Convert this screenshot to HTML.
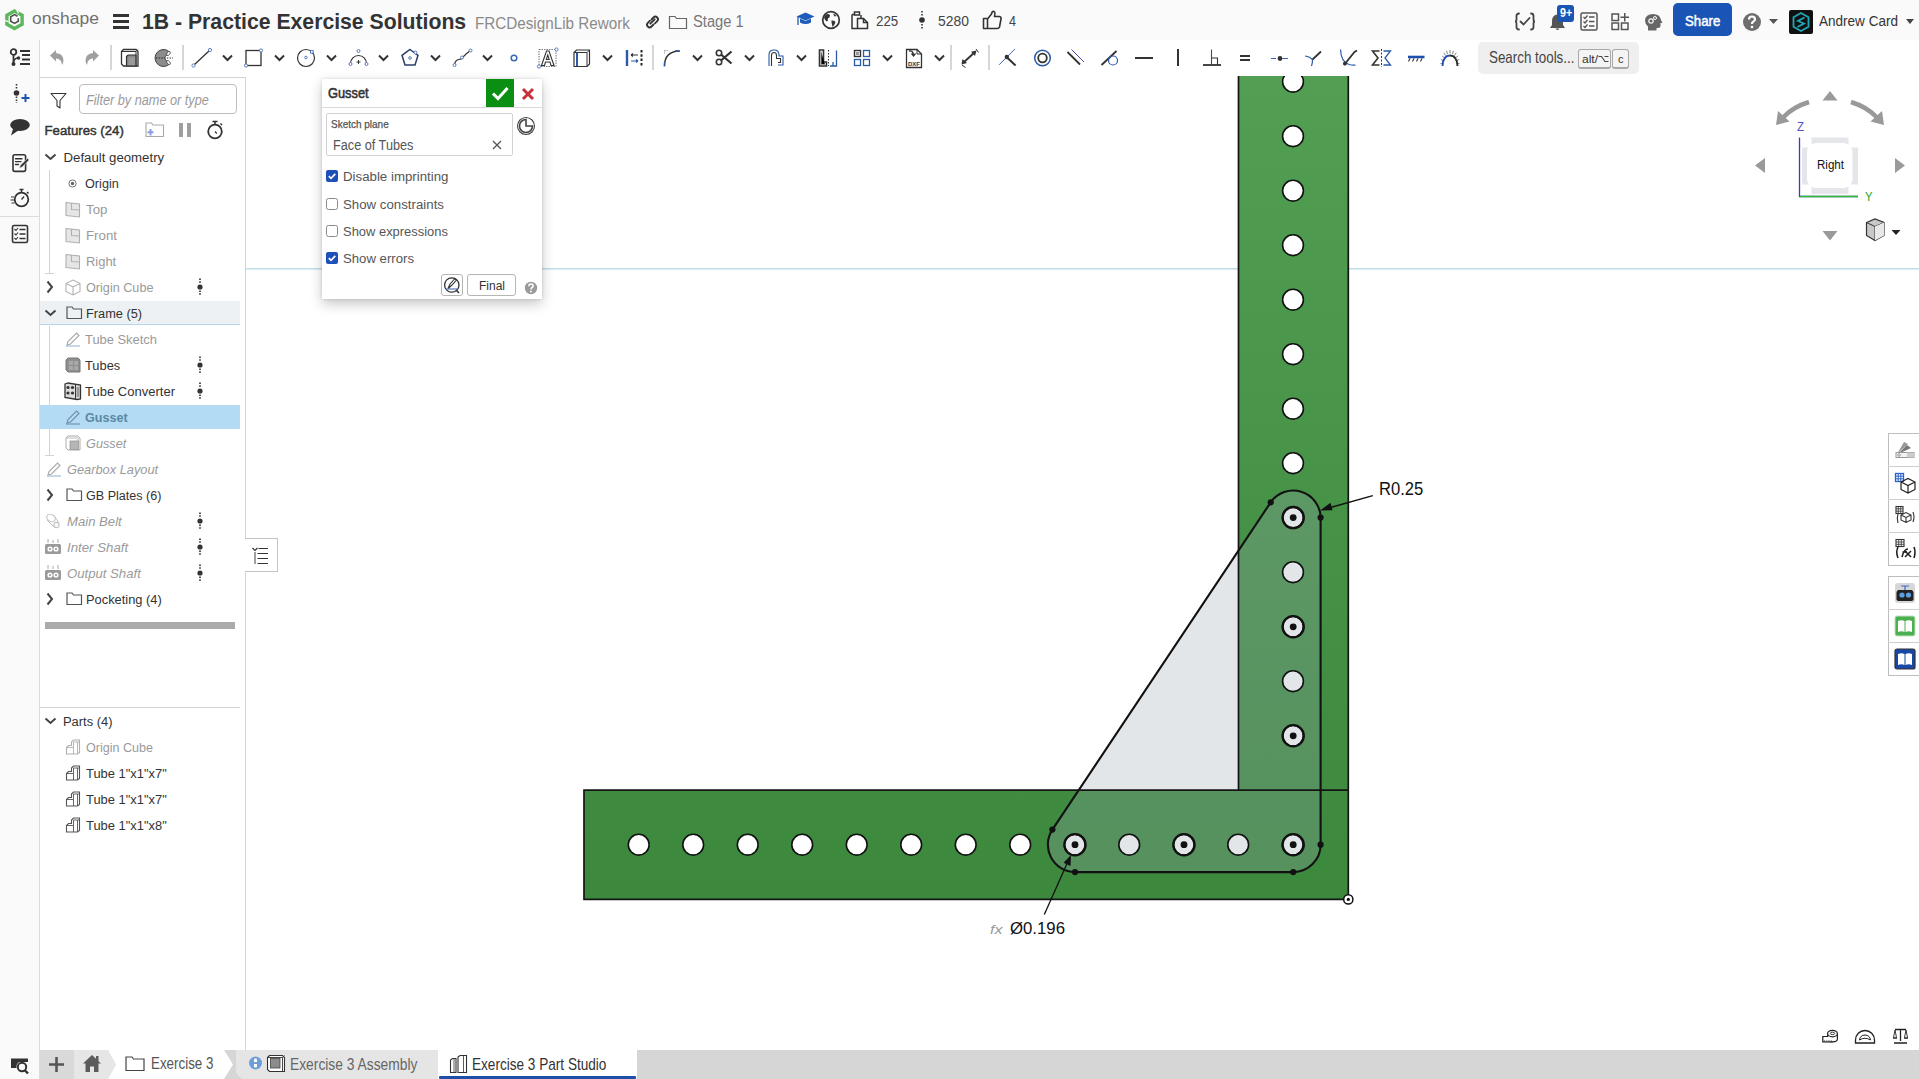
<!DOCTYPE html>
<html><head><meta charset="utf-8"><style>
html,body{margin:0;padding:0;width:1919px;height:1079px;overflow:hidden;background:#fff;}
body{position:relative;font-family:"Liberation Sans",sans-serif;}
.b{position:absolute;}
.s{position:absolute;overflow:visible;}
.t{position:absolute;white-space:nowrap;transform-origin:0 0;}
</style></head><body>
<div class="b" style="left:0px;top:0px;width:1919px;height:40px;background:#fafafa"></div>
<div class="b" style="left:0px;top:40px;width:40px;height:1039px;background:#fafafa;border-right:1px solid #dcdcdc;box-sizing:border-box"></div>
<div class="b" style="left:40px;top:40px;width:1879px;height:37px;background:#fff"></div>
<div class="b" style="left:40px;top:77px;width:206px;height:973px;background:#fff;border-top:1px solid #d4d4d4;border-right:1px solid #d4d4d4;box-sizing:border-box"></div>
<div class="b" style="left:246px;top:77px;width:1673px;height:973px;background:#fff"></div>
<svg class="s" style="left:4px;top:8px;" width="22" height="24" viewBox="0 0 22 24">
<path d="M10.5 2.95 L18.12 7.35 L18.12 16.15 L10.5 20.55 L2.88 16.15 L2.88 7.35 Z" fill="none" stroke="#5cb85c" stroke-width="3.4" stroke-linejoin="miter"/>
<path d="M12.6 2.2 L14.6 5.4" stroke="#fafafa" stroke-width="1.3"/>
<path d="M0.8 12.6 L4.6 13.6" stroke="#fafafa" stroke-width="1.3"/>
<path d="M13.5 8.3 L10.5 6.6 L6.7 8.8 V13.2 L10.5 15.4 L14.3 13.2 V10.2" fill="none" stroke="#505050" stroke-width="1.6"/>
</svg>
<div class="t" style="left:31.80px;top:10.82px;font-size:16.86px;line-height:16.86px;color:#707070;transform:scaleX(1.0328);">onshape</div>
<div class="b" style="left:113px;top:14px;width:16px;height:3px;background:#333"></div>
<div class="b" style="left:113px;top:20px;width:16px;height:3px;background:#333"></div>
<div class="b" style="left:113px;top:26px;width:16px;height:3px;background:#333"></div>
<div class="t" style="left:141.70px;top:10.61px;font-size:21.95px;line-height:21.95px;color:#333;font-weight:bold;transform:scaleX(0.9668);">1B - Practice Exercise Solutions</div>
<div class="t" style="left:475.30px;top:16.08px;font-size:15.84px;line-height:15.84px;color:#8a8a8a;transform:scaleX(0.9618);">FRCDesignLib Rework</div>
<svg class="s" style="left:644px;top:14px;" width="17" height="16" viewBox="0 0 17 16">
<g fill="none" stroke="#333" stroke-width="1.8" stroke-linecap="round">
<path d="M7.5 5.5 L9.5 3.5 A2.6 2.6 0 0 1 13.2 7.2 L11 9.4"/>
<path d="M9.5 10.5 L7.5 12.5 A2.6 2.6 0 0 1 3.8 8.8 L6 6.6"/>
<path d="M6.3 9.7 L10.7 5.3"/>
</g></svg>
<svg class="s" style="left:668px;top:14px;" width="20" height="16" viewBox="0 0 20 16"><path d="M1.5 2.5 H7 L8.5 4.5 H18.5 V14.5 H1.5 Z" fill="none" stroke="#666" stroke-width="1.2"/></svg>
<div class="t" style="left:692.80px;top:14.48px;font-size:15.84px;line-height:15.84px;color:#777;transform:scaleX(0.9302);">Stage 1</div>
<svg class="s" style="left:796px;top:11px;" width="19" height="17" viewBox="0 0 19 17">
<path d="M9.5 1.5 L18.5 5.5 L9.5 9.5 L0.5 5.5 Z" fill="#1d5cb8"/>
<path d="M4 7.5 V11.5 Q9.5 14.5 15 11.5 V7.5 L9.5 10 Z" fill="#1d5cb8"/>
<path d="M2 6 V14" stroke="#1d5cb8" stroke-width="1.3"/>
</svg>
<svg class="s" style="left:821px;top:10px;" width="20" height="20" viewBox="0 0 20 20">
<circle cx="10" cy="10" r="8.3" fill="none" stroke="#333" stroke-width="1.7"/>
<path d="M5 4.5 Q7.5 3.5 9 5 L8.5 7.5 Q6 8.5 7 10.5 L5.5 11.5 Q3 9.5 3 7 Z" fill="#333"/>
<path d="M10.5 10.5 Q13.5 10 14.5 12 Q13.5 15.5 11.5 17 Q11 14 10.5 12.5 Z" fill="#333"/>
<path d="M12 3.5 Q14.5 4 15.5 6 L13.5 6.5 Z" fill="#333"/>
</svg>
<svg class="s" style="left:850px;top:11px;" width="20" height="19" viewBox="0 0 20 19">
<g fill="none" stroke="#333" stroke-width="1.5">
<path d="M2 3.5 H5 M2 3.5 V17.5 H7"/>
<rect x="4.5" y="1" width="5" height="3" />
<path d="M7.5 7.5 H13.5 L17.5 11.5 V17.5 H7.5 Z"/>
<path d="M13.5 7.5 V11.5 H17.5"/>
<path d="M11 4 V7.5"/>
</g></svg>
<div class="t" style="left:875.80px;top:14.14px;font-size:14.94px;line-height:14.94px;color:#444;transform:scaleX(0.8906);">225</div>
<svg class="s" style="left:917px;top:10px;" width="10" height="20" viewBox="0 0 10 20">
<circle cx="5" cy="10" r="2.8" fill="#333"/>
<path d="M5 1 V6 M5 14 V19" stroke="#333" stroke-width="1.6" stroke-dasharray="1.6 1.4"/>
</svg>
<div class="t" style="left:937.60px;top:14.14px;font-size:14.94px;line-height:14.94px;color:#444;transform:scaleX(0.9293);">5280</div>
<svg class="s" style="left:982px;top:10px;" width="21" height="20" viewBox="0 0 21 20">
<path d="M1.5 8.5 H5.5 V18.5 H1.5 Z M5.5 9 L9.5 4 Q10 1 12 1.5 Q13.5 2 12.5 6.5 H17.5 Q19.5 7 19 9 L17.5 17 Q17 18.5 15 18.5 H5.5" fill="none" stroke="#333" stroke-width="1.6" stroke-linejoin="round"/>
</svg>
<div class="t" style="left:1009.00px;top:14.14px;font-size:14.94px;line-height:14.94px;color:#444;transform:scaleX(0.8425);">4</div>
<svg class="s" style="left:1514px;top:12px;" width="22" height="19" viewBox="0 0 22 19">
<g fill="none" stroke="#444" stroke-width="1.8" stroke-linecap="round">
<path d="M5 1.5 Q2.5 1.5 2.5 4 V7.5 Q2.5 9.5 1 9.5 Q2.5 9.5 2.5 11.5 V15 Q2.5 17.5 5 17.5"/>
<path d="M17 1.5 Q19.5 1.5 19.5 4 V7.5 Q19.5 9.5 21 9.5 Q19.5 9.5 19.5 11.5 V15 Q19.5 17.5 17 17.5"/>
<path d="M6.5 9.5 L9.5 12.5 L15.5 6"/>
</g></svg>
<svg class="s" style="left:1548px;top:13px;" width="20" height="18" viewBox="0 0 20 18">
<path d="M9.5 1.5 Q4 2 4 8 V12 L2 15 H17 L15 12 V8 Q15 2 9.5 1.5 Z" fill="#555"/>
<path d="M7.5 15.5 Q9.5 18.5 11.5 15.5" fill="#555"/>
</svg>
<div class="b" style="left:1557px;top:5px;width:17px;height:17px;background:#1a55b5;border-radius:3px"></div>
<div class="t" style="left:1559.50px;top:7.14px;font-size:12.35px;line-height:12.35px;color:#fff;font-weight:bold;transform:scaleX(0.8733);">9+</div>
<svg class="s" style="left:1580px;top:12px;" width="18" height="19" viewBox="0 0 18 19">
<rect x="1" y="1" width="16" height="17" rx="1.5" fill="none" stroke="#555" stroke-width="1.5"/>
<g stroke="#555" stroke-width="1.3" fill="none">
<path d="M3.5 5 L5 6.5 L7.5 3.5 M3.5 9.5 L5 11 L7.5 8 M3.5 14 L5 15.5 L7.5 12.5"/>
<path d="M9 5 H14.5 M9 9.5 H14.5 M9 14 H14.5"/>
</g></svg>
<svg class="s" style="left:1611px;top:12px;" width="20" height="19" viewBox="0 0 20 19">
<g fill="none" stroke="#555" stroke-width="1.5">
<rect x="1" y="2" width="6.5" height="6.5"/>
<rect x="1" y="11" width="6.5" height="6.5"/>
<rect x="10.5" y="11" width="6.5" height="6.5"/>
<path d="M13.75 1 V9.5 M9.5 5.25 H18"/>
</g></svg>
<svg class="s" style="left:1644px;top:13px;" width="19" height="18" viewBox="0 0 19 18">
<path d="M9 1 Q16 1 17 7 L18.5 10 H16.5 V13 Q16.5 15 14 15 H12.5 V17.5 H4 V13.5 Q1 11 1 7.5 Q1.5 1 9 1 Z" fill="#666"/>
<circle cx="7" cy="8" r="2.2" fill="none" stroke="#fafafa" stroke-width="1.2"/>
<circle cx="11" cy="5" r="1.5" fill="none" stroke="#fafafa" stroke-width="1"/>
</svg>
<div class="b" style="left:1673px;top:3px;width:59px;height:33px;background:#1a55b5;border-radius:5px"></div>
<div class="t" style="left:1685.00px;top:12.80px;font-size:15.12px;line-height:15.12px;color:#fff;transform:scaleX(0.8753);-webkit-text-stroke:0.5px #fff;">Share</div>
<svg class="s" style="left:1742px;top:12px;" width="20" height="20" viewBox="0 0 20 20">
<circle cx="10" cy="10" r="9" fill="#6e6e6e"/>
<path d="M7 7.5 Q7 4.5 10 4.5 Q13 4.5 13 7.2 Q13 9 10.8 10 Q10 10.5 10 12" fill="none" stroke="#fff" stroke-width="2.2"/>
<circle cx="10" cy="15" r="1.3" fill="#fff"/>
</svg>
<svg class="s" style="left:1769px;top:19px;" width="9" height="5" viewBox="0 0 9 5"><path d="M0 0 H9 L4.5 5 Z" fill="#555"/></svg>
<div class="b" style="left:1789px;top:10px;width:24px;height:24px;background:#111;border-radius:2px"></div>
<svg class="s" style="left:1789px;top:10px;" width="24" height="24" viewBox="0 0 24 24">
<path d="M12 3 L19.5 7.3 V16.7 L12 21 L4.5 16.7 V7.3 Z" fill="none" stroke="#1fa8b4" stroke-width="1.8"/>
<path d="M15.5 7.5 L9 11 L15 13.5 L8.5 17" fill="none" stroke="#1fa8b4" stroke-width="1.8"/>
</svg>
<div class="t" style="left:1819.20px;top:13.77px;font-size:14.68px;line-height:14.68px;color:#333;transform:scaleX(0.9221);">Andrew Card</div>
<svg class="s" style="left:1906px;top:19px;" width="8" height="5" viewBox="0 0 8 5"><path d="M0 0 H8 L4 5 Z" fill="#444"/></svg>
<svg class="s" style="left:49px;top:49px;" width="16" height="17" viewBox="0 0 16 17"><path d="M1 6.5 L7 1 V4 Q14 4.5 14.5 11 Q14.5 14 13 16 Q12.5 9.5 7 9.5 V12.5 Z" fill="#a0a0a0"/></svg>
<svg class="s" style="left:84px;top:49px;" width="16" height="17" viewBox="0 0 16 17"><path d="M15 6.5 L9 1 V4 Q2 4.5 1.5 11 Q1.5 14 3 16 Q3.5 9.5 9 9.5 V12.5 Z" fill="#a0a0a0"/></svg>
<div class="b" style="left:110px;top:45px;width:2px;height:25px;background:#d6d6d6"></div>
<svg class="s" style="left:120px;top:48px;" width="20" height="20" viewBox="0 0 20 20">
<path d="M1.5 3.5 L3.5 1.5 H16 L18 3.5 V18 H3.5 L1.5 16 Z" fill="#fff" stroke="#333" stroke-width="1.3"/>
<path d="M1.5 3.5 H16 V18 M16 3.5 L18 1.5" fill="none" stroke="#333" stroke-width="1"/>
<path d="M6.5 8.5 L8 7 H16 V18 H6.5 Z" fill="#8a8a8a" stroke="#333" stroke-width="1.2"/>
<rect x="8.5" y="9.5" width="6.5" height="7.5" fill="#9a9a9a"/>
</svg>
<svg class="s" style="left:155px;top:48px;" width="19" height="20" viewBox="0 0 19 20">
<path d="M14 3.5 A8.5 8.5 0 1 0 14 16.5 L10.5 11.5 Q8.5 10 10.5 8.5 Z" fill="#8c8c8c" stroke="#444" stroke-width="1"/>
<ellipse cx="13.5" cy="5.5" rx="1.4" ry="2.4" transform="rotate(40 13.5 5.5)" fill="#fff" stroke="#444" stroke-width="0.8"/>
<ellipse cx="13.5" cy="14.5" rx="1.4" ry="2.4" transform="rotate(-40 13.5 14.5)" fill="#fff" stroke="#444" stroke-width="0.8"/>
<path d="M1 10 H18" stroke="#222" stroke-width="0.9" stroke-dasharray="1.5 1.2"/>
</svg>
<div class="b" style="left:182px;top:45px;width:2px;height:25px;background:#d6d6d6"></div>
<svg class="s" style="left:191px;top:48px;" width="22" height="20" viewBox="0 0 22 20">
<path d="M3.5 16.5 L18.5 2.5" stroke="#333" stroke-width="1.3"/>
<circle cx="2.5" cy="17.5" r="1.6" fill="#fff" stroke="#4a6fb5" stroke-width="0.9"/>
<circle cx="19" cy="2" r="1.6" fill="#fff" stroke="#4a6fb5" stroke-width="0.9"/></svg>
<svg class="s" style="left:222px;top:54px;" width="11" height="8" viewBox="0 0 11 8"><path d="M1 1.5 L5.5 6 L10 1.5" fill="none" stroke="#333" stroke-width="2"/></svg>
<svg class="s" style="left:244px;top:48px;" width="20" height="20" viewBox="0 0 20 20">
<rect x="2" y="2.5" width="15" height="15" fill="none" stroke="#333" stroke-width="1.3"/>
<circle cx="2" cy="17.5" r="1.6" fill="#fff" stroke="#4a6fb5" stroke-width="0.9"/>
<circle cx="17" cy="2.5" r="1.6" fill="#fff" stroke="#4a6fb5" stroke-width="0.9"/></svg>
<svg class="s" style="left:274px;top:54px;" width="11" height="8" viewBox="0 0 11 8"><path d="M1 1.5 L5.5 6 L10 1.5" fill="none" stroke="#333" stroke-width="2"/></svg>
<svg class="s" style="left:296px;top:48px;" width="21" height="20" viewBox="0 0 21 20">
<circle cx="10" cy="10" r="8.5" fill="none" stroke="#333" stroke-width="1.2"/>
<circle cx="10" cy="9.5" r="1.3" fill="none" stroke="#4a6fb5" stroke-width="0.9"/>
<rect x="14.5" y="2.5" width="2.6" height="2.6" fill="#fff" stroke="#4a6fb5" stroke-width="0.9"/></svg>
<svg class="s" style="left:326px;top:54px;" width="11" height="8" viewBox="0 0 11 8"><path d="M1 1.5 L5.5 6 L10 1.5" fill="none" stroke="#333" stroke-width="2"/></svg>
<svg class="s" style="left:348px;top:48px;" width="21" height="20" viewBox="0 0 21 20">
<path d="M2.5 15.5 A8 8 0 0 1 18.5 15.5" fill="none" stroke="#333" stroke-width="1.2"/>
<circle cx="2.5" cy="16" r="1.5" fill="#fff" stroke="#4a6fb5" stroke-width="0.9"/>
<circle cx="18.5" cy="16" r="1.5" fill="#fff" stroke="#4a6fb5" stroke-width="0.9"/>
<circle cx="10.5" cy="3" r="1.5" fill="#fff" stroke="#4a6fb5" stroke-width="0.9"/>
<path d="M10.5 12 V16 M8.5 14 H12.5" stroke="#333" stroke-width="1"/></svg>
<svg class="s" style="left:378px;top:54px;" width="11" height="8" viewBox="0 0 11 8"><path d="M1 1.5 L5.5 6 L10 1.5" fill="none" stroke="#333" stroke-width="2"/></svg>
<svg class="s" style="left:400px;top:48px;" width="21" height="20" viewBox="0 0 21 20">
<path d="M10 1.5 L18 7.3 L15 17 H5 L2 7.3 Z" fill="none" stroke="#2d3f66" stroke-width="1.5"/>
<circle cx="10" cy="10" r="1.3" fill="none" stroke="#4a6fb5" stroke-width="0.9"/>
<circle cx="15.5" cy="4.5" r="1.5" fill="#fff" stroke="#4a6fb5" stroke-width="0.9"/></svg>
<svg class="s" style="left:430px;top:54px;" width="11" height="8" viewBox="0 0 11 8"><path d="M1 1.5 L5.5 6 L10 1.5" fill="none" stroke="#333" stroke-width="2"/></svg>
<svg class="s" style="left:452px;top:48px;" width="21" height="20" viewBox="0 0 21 20">
<path d="M2.5 17 Q3 12 7 11.5 Q10 11.5 12 8 Q15 5 18.5 2.5" fill="none" stroke="#333" stroke-width="1.2"/>
<circle cx="2.5" cy="17" r="1.5" fill="#fff" stroke="#4a6fb5" stroke-width="0.9"/>
<circle cx="10" cy="9.5" r="1.5" fill="#fff" stroke="#4a6fb5" stroke-width="0.9"/>
<circle cx="18.5" cy="2.5" r="1.5" fill="#fff" stroke="#4a6fb5" stroke-width="0.9"/></svg>
<svg class="s" style="left:482px;top:54px;" width="11" height="8" viewBox="0 0 11 8"><path d="M1 1.5 L5.5 6 L10 1.5" fill="none" stroke="#333" stroke-width="2"/></svg>
<svg class="s" style="left:509px;top:53px;" width="10" height="10" viewBox="0 0 10 10"><circle cx="5" cy="5" r="2.8" fill="none" stroke="#3a66b5" stroke-width="1.5"/></svg>
<svg class="s" style="left:537px;top:47px;" width="22" height="22" viewBox="0 0 22 22">
<rect x="2" y="2.5" width="17" height="17" fill="none" stroke="#555" stroke-width="0.8" stroke-dasharray="1.5 1"/>
<path d="M4.5 18.5 L9.5 4 H12 L17 18.5 H14 L13 15 H8.5 L7.5 18.5 Z M9.3 12.5 H12.2 L10.75 8 Z" fill="#fff" stroke="#333" stroke-width="1.1"/>
<circle cx="2" cy="19.5" r="1.6" fill="#fff" stroke="#4a6fb5" stroke-width="0.9"/>
<circle cx="19.5" cy="2.5" r="1.6" fill="#fff" stroke="#4a6fb5" stroke-width="0.9"/></svg>
<svg class="s" style="left:573px;top:49px;" width="19" height="19" viewBox="0 0 19 19">
<path d="M1 3.5 L3.5 1 H16.5 V15 L14 17.5 H1 Z" fill="#fff" stroke="#333" stroke-width="1.2"/>
<path d="M1 3.5 H14 V17.5 M14 3.5 L16.5 1" fill="none" stroke="#333" stroke-width="1"/>
<path d="M4 3.8 V17" stroke="#2a5aa8" stroke-width="2"/></svg>
<svg class="s" style="left:602px;top:54px;" width="11" height="8" viewBox="0 0 11 8"><path d="M1 1.5 L5.5 6 L10 1.5" fill="none" stroke="#333" stroke-width="2"/></svg>
<svg class="s" style="left:624px;top:48px;" width="21" height="20" viewBox="0 0 21 20">
<path d="M3 2 V18" stroke="#2a5aa8" stroke-width="2.4"/>
<path d="M17.5 2 V18" stroke="#222" stroke-width="2" stroke-dasharray="2.5 1.8"/>
<path d="M7 7 H14 M7 7 L9 5.5 M7 7 L9 8.5" stroke="#333" stroke-width="1.1" fill="none"/>
<path d="M7 13 H14 M14 13 L12 11.5 M14 13 L12 14.5" stroke="#2a5aa8" stroke-width="1.1" fill="none"/></svg>
<div class="b" style="left:652px;top:45px;width:2px;height:25px;background:#d6d6d6"></div>
<svg class="s" style="left:662px;top:48px;" width="20" height="20" viewBox="0 0 20 20">
<path d="M2.5 2.5 H6" stroke="#666" stroke-width="0.7" stroke-dasharray="1 1"/>
<path d="M2.5 2.5 V6" stroke="#666" stroke-width="0.7" stroke-dasharray="1 1"/>
<path d="M2.5 18 Q2.5 3.5 17.5 3" fill="none" stroke="#333" stroke-width="1.5"/>
<path d="M2.5 14 V18.5" stroke="#2a5aa8" stroke-width="1.4"/>
<path d="M13 3 H18" stroke="#2a5aa8" stroke-width="1.4"/></svg>
<svg class="s" style="left:692px;top:54px;" width="11" height="8" viewBox="0 0 11 8"><path d="M1 1.5 L5.5 6 L10 1.5" fill="none" stroke="#333" stroke-width="2"/></svg>
<svg class="s" style="left:715px;top:49px;" width="18" height="17" viewBox="0 0 18 17">
<circle cx="4" cy="4" r="2.7" fill="none" stroke="#333" stroke-width="1.6"/>
<circle cx="4" cy="13" r="2.7" fill="none" stroke="#333" stroke-width="1.6"/>
<path d="M6 5.5 L16.5 14.5 M6 11.5 L16.5 2.5" stroke="#333" stroke-width="2.2"/></svg>
<svg class="s" style="left:744px;top:54px;" width="11" height="8" viewBox="0 0 11 8"><path d="M1 1.5 L5.5 6 L10 1.5" fill="none" stroke="#333" stroke-width="2"/></svg>
<svg class="s" style="left:767px;top:48px;" width="18" height="19" viewBox="0 0 18 19">
<path d="M2 18 V7 Q2 2 7 2 Q12 2 12 7 V8 H16 V17 H11" fill="none" stroke="#2a5aa8" stroke-width="1.1"/>
<path d="M4.5 18 V7.5 Q4.5 4.5 7 4.5 Q9.5 4.5 9.5 7.5 V10.5 H13.5 V14.5 H11" fill="none" stroke="#333" stroke-width="1.1"/></svg>
<svg class="s" style="left:796px;top:54px;" width="11" height="8" viewBox="0 0 11 8"><path d="M1 1.5 L5.5 6 L10 1.5" fill="none" stroke="#333" stroke-width="2"/></svg>
<svg class="s" style="left:818px;top:48px;" width="21" height="20" viewBox="0 0 21 20">
<path d="M1.5 2 H5.5 V14 H8.5 V18 H1.5 Z" fill="#fff" stroke="#333" stroke-width="1.6"/>
<path d="M3 3.5 V16.5 H7" stroke="#999" stroke-width="1"/>
<path d="M10.5 2 V18" stroke="#333" stroke-width="1" stroke-dasharray="1.5 1.5"/>
<path d="M12 18 H18.5 V2.5 M15 18 V14" fill="none" stroke="#2a5aa8" stroke-width="1.3"/></svg>
<svg class="s" style="left:853px;top:49px;" width="19" height="19" viewBox="0 0 19 19">
<rect x="1.5" y="1.5" width="6" height="6" fill="#fff" stroke="#333" stroke-width="1.4"/>
<rect x="3" y="3" width="3" height="3" fill="#999"/>
<rect x="10.5" y="1.5" width="6" height="6" fill="none" stroke="#2a5aa8" stroke-width="1.3"/>
<rect x="1.5" y="10.5" width="6" height="6" fill="none" stroke="#2a5aa8" stroke-width="1.3"/>
<rect x="10.5" y="10.5" width="6" height="6" fill="none" stroke="#2a5aa8" stroke-width="1.3"/></svg>
<svg class="s" style="left:882px;top:54px;" width="11" height="8" viewBox="0 0 11 8"><path d="M1 1.5 L5.5 6 L10 1.5" fill="none" stroke="#333" stroke-width="2"/></svg>
<svg class="s" style="left:905px;top:48px;" width="19" height="21" viewBox="0 0 19 21">
<path d="M1.5 1.5 H12 L16.5 6 V19.5 H1.5 Z" fill="#fff" stroke="#333" stroke-width="1.3"/>
<path d="M12 1.5 V6 H16.5" fill="none" stroke="#333" stroke-width="1"/>
<path d="M4 3 Q8 2 8.5 7 M6.5 5.5 L8.5 8 L10.5 5.5" fill="none" stroke="#333" stroke-width="1.3"/>
<text x="9" y="17.8" font-size="6" font-weight="bold" text-anchor="middle" font-family="Liberation Sans" fill="#333">DXF</text></svg>
<svg class="s" style="left:934px;top:54px;" width="11" height="8" viewBox="0 0 11 8"><path d="M1 1.5 L5.5 6 L10 1.5" fill="none" stroke="#333" stroke-width="2"/></svg>
<div class="b" style="left:950px;top:45px;width:2px;height:25px;background:#d6d6d6"></div>
<svg class="s" style="left:959px;top:48px;" width="21" height="20" viewBox="0 0 21 20">
<path d="M4 15 L16 4" stroke="#333" stroke-width="1.8"/>
<path d="M2.5 16.5 L3.5 11 L8 15 Z M17.5 2.5 L12 3.8 L16 8 Z" fill="#333"/>
<path d="M3 17 L6.5 19.5 M17 1 L19.5 4.5" stroke="#333" stroke-width="1"/></svg>
<div class="b" style="left:988px;top:45px;width:2px;height:25px;background:#d6d6d6"></div>
<svg class="s" style="left:997px;top:48px;" width="21" height="20" viewBox="0 0 21 20">
<path d="M2.1 16.8 L17.8 1.1" stroke="#3a62c0" stroke-width="1"/>
<path d="M10 9.5 L18.6 17.6" stroke="#333" stroke-width="2"/>
<circle cx="9.8" cy="9" r="2.2" fill="#333"/></svg>
<svg class="s" style="left:1033px;top:48px;" width="19" height="20" viewBox="0 0 19 20">
<circle cx="9.5" cy="10" r="7.8" fill="none" stroke="#2a5aa8" stroke-width="1.5"/>
<circle cx="9.5" cy="10" r="4.3" fill="none" stroke="#333" stroke-width="1.8"/></svg>
<svg class="s" style="left:1066px;top:48px;" width="20" height="20" viewBox="0 0 20 20">
<path d="M1.5 4 L14 16.5" stroke="#333" stroke-width="1.8"/>
<path d="M5.5 1.5 L18 14" stroke="#4a4ab8" stroke-width="1"/></svg>
<svg class="s" style="left:1100px;top:48px;" width="20" height="20" viewBox="0 0 20 20">
<path d="M1.5 17 L16.5 3" stroke="#333" stroke-width="1.8"/>
<circle cx="13" cy="12.5" r="4.5" fill="none" stroke="#2a5aa8" stroke-width="1.2"/></svg>
<div class="b" style="left:1135px;top:57px;width:18px;height:2px;background:#333"></div>
<div class="b" style="left:1177px;top:49px;width:2px;height:17px;background:#333"></div>
<svg class="s" style="left:1202px;top:48px;" width="21" height="20" viewBox="0 0 21 20">
<path d="M1 17 H19" stroke="#333" stroke-width="1.8"/>
<path d="M9.5 1.5 V17" stroke="#2a4a9a" stroke-width="1.1"/>
<path d="M9.5 10 H15.5 V17" fill="none" stroke="#333" stroke-width="1.1"/></svg>
<div class="b" style="left:1240px;top:55px;width:10px;height:2px;background:#333"></div>
<div class="b" style="left:1240px;top:59px;width:10px;height:2px;background:#333"></div>
<svg class="s" style="left:1269px;top:52px;" width="21" height="12" viewBox="0 0 21 12">
<path d="M2 6.5 H7 M13.5 6.5 H19" stroke="#3a62c0" stroke-width="1.2"/>
<circle cx="11" cy="6.5" r="2.4" fill="#333"/></svg>
<svg class="s" style="left:1304px;top:48px;" width="20" height="20" viewBox="0 0 20 20">
<path d="M1 8 Q6 8.5 8.5 12 Q8.5 15.5 7.5 18" fill="none" stroke="#2a5aa8" stroke-width="1.2"/>
<path d="M8.5 11.5 L17 3.5" stroke="#333" stroke-width="1.8"/></svg>
<svg class="s" style="left:1339px;top:48px;" width="20" height="20" viewBox="0 0 20 20">
<path d="M1.5 1.5 Q2 14 10 16.5 Q14 17.5 16.5 17" fill="none" stroke="#2a5aa8" stroke-width="1.2"/>
<path d="M5 17 L15.5 4 L18 2.5" stroke="#333" stroke-width="1.8" fill="none"/>
<circle cx="6" cy="15.5" r="2" fill="#333"/></svg>
<svg class="s" style="left:1371px;top:48px;" width="21" height="20" viewBox="0 0 21 20">
<path d="M8.5 3 H1.5 L7 10 L1.5 17 H8.5" fill="none" stroke="#333" stroke-width="1.6"/>
<path d="M12.5 3 H19.5 L14 10 L19.5 17 H12.5" fill="none" stroke="#2a5aa8" stroke-width="1.3"/>
<path d="M10.5 1 V19" stroke="#333" stroke-width="1" stroke-dasharray="2 1.5"/></svg>
<svg class="s" style="left:1406px;top:54px;" width="20" height="9" viewBox="0 0 20 9">
<path d="M2 3 H18.5" stroke="#1e4fae" stroke-width="2.6"/>
<path d="M2.5 7.5 L4 4.5 M6.5 7.5 L8 4.5 M10.5 7.5 L12 4.5 M14.5 7.5 L16 4.5" stroke="#333" stroke-width="1.1"/></svg>
<svg class="s" style="left:1439px;top:47px;" width="22" height="21" viewBox="0 0 22 21">
<g stroke="#777" stroke-width="0.9">
<path d="M11 3 V6.5 M7.5 3.8 L8.6 7.2 M14.5 3.8 L13.4 7.2 M4.8 5.8 L6.6 8.6 M17.2 5.8 L15.4 8.6 M3 8.8 L5.2 10.8 M19 8.8 L16.8 10.8 M1.8 12.5 L4.3 13.5 M20.2 12.5 L17.7 13.5 M1.5 16.5 H4 M20.5 16.5 H18"/>
</g>
<path d="M3.5 19 Q4 8.5 11 8.5" fill="none" stroke="#1e4fae" stroke-width="1.9"/>
<path d="M11 8.5 Q18 8.5 18.5 19" fill="none" stroke="#2a2a2a" stroke-width="1.9"/></svg>
<div class="b" style="left:1478px;top:42px;width:161px;height:32px;background:#efefef;border-radius:5px"></div>
<div class="t" style="left:1488.50px;top:49.94px;font-size:16.72px;line-height:16.72px;color:#444;transform:scaleX(0.8002);">Search tools...</div>
<div class="b" style="left:1578px;top:49px;width:33px;height:20px;border:1px solid #a8a8a8;border-bottom-width:2px;border-radius:3px;box-sizing:border-box;background:#f4f4f4"></div>
<div class="t" style="left:1581.90px;top:54.22px;font-size:10.83px;line-height:10.83px;color:#333;transform:scaleX(1.1071);">alt/</div>
<svg class="s" style="left:1598px;top:55px;" width="11" height="8" viewBox="0 0 11 8"><path d="M0.5 1.5 H3.5 L7 6.5 H10.5 M6.5 1.5 H10.5" fill="none" stroke="#444" stroke-width="1.1"/></svg>
<div class="b" style="left:1612px;top:49px;width:17px;height:20px;border:1px solid #a8a8a8;border-bottom-width:2px;border-radius:3px;box-sizing:border-box;background:#f4f4f4"></div>
<div class="t" style="left:1618.00px;top:54.10px;font-size:10.98px;line-height:10.98px;color:#333;">c</div>
<svg class="s" style="left:9px;top:48px;" width="22" height="20" viewBox="0 0 22 20">
<circle cx="4.5" cy="4" r="2.8" fill="none" stroke="#333" stroke-width="1.8"/>
<path d="M4.5 7 V15" stroke="#333" stroke-width="1.8"/>
<path d="M4.5 14 Q5 10.5 9 10" fill="none" stroke="#333" stroke-width="1.6"/>
<circle cx="4.5" cy="16" r="2" fill="#333"/>
<circle cx="9.5" cy="10" r="1.8" fill="#333"/>
<path d="M11 3 H21 M13 7 H21 M13 11.5 H21 M11 16 H21" stroke="#333" stroke-width="1.8"/></svg>
<svg class="s" style="left:12px;top:83px;" width="20" height="21" viewBox="0 0 20 21">
<circle cx="4.5" cy="10" r="2.8" fill="#333"/>
<path d="M4.5 1 V6 M4.5 13.5 V20" stroke="#333" stroke-width="1.6" stroke-dasharray="1.6 1.4"/>
<path d="M13.5 11 V19 M9.5 15 H17.5" stroke="#1e55b0" stroke-width="2"/></svg>
<svg class="s" style="left:9px;top:118px;" width="22" height="19" viewBox="0 0 22 19">
<ellipse cx="11" cy="7" rx="9.8" ry="6" fill="#333"/>
<path d="M4 11 L2 17.5 L10 12 Z" fill="#333"/></svg>
<svg class="s" style="left:11px;top:152px;" width="20" height="21" viewBox="0 0 20 21">
<rect x="2" y="2.8" width="12.6" height="16.6" rx="1.8" fill="none" stroke="#333" stroke-width="1.6"/>
<path d="M4.5 6.7 H11 M4.5 9.6 H10 M4.5 12.5 H7.5" stroke="#333" stroke-width="1.4" stroke-linecap="round"/>
<path d="M8 16.5 L9.5 13 L16.5 6.3 L18.2 8 L11.5 14.8 Z" fill="#333" stroke="#fafafa" stroke-width="0.6"/></svg>
<svg class="s" style="left:10px;top:188px;" width="21" height="20" viewBox="0 0 21 20">
<circle cx="11.5" cy="11.5" r="6.8" fill="none" stroke="#333" stroke-width="1.8"/>
<path d="M9.5 1.5 H13.5 M11.5 1.5 V4.5 M17 4 L18.5 5.5" stroke="#333" stroke-width="1.5"/>
<path d="M11.5 11.5 L14 8.5" stroke="#333" stroke-width="1.3"/>
<path d="M1 9 H4 M0.5 12 H4 M1.5 15 H4.5" stroke="#333" stroke-width="1.1"/></svg>
<div class="b" style="left:0px;top:216px;width:39px;height:1px;background:#dcdcdc"></div>
<svg class="s" style="left:11px;top:224px;" width="19" height="20" viewBox="0 0 19 20">
<rect x="1.5" y="1.5" width="15" height="17" rx="1.5" fill="none" stroke="#333" stroke-width="1.6"/>
<path d="M3.5 5 L5 6.5 L7 4 M3.5 9.5 L5 11 L7 8.5 M3.5 14 L5 15.5 L7 13" stroke="#333" stroke-width="1.1" fill="none"/>
<path d="M8.5 5.5 H14.5 M8.5 10 H14.5 M8.5 14.5 H14.5" stroke="#333" stroke-width="1.5"/></svg>
<svg class="s" style="left:10px;top:1057px;" width="21" height="18" viewBox="0 0 21 18">
<path d="M1 1.5 H18 V5 H9 Q6 7 6.5 11 H1 Z" fill="#333"/>
<circle cx="12" cy="10" r="4.2" fill="#fafafa" stroke="#333" stroke-width="2"/>
<path d="M14.5 13 L18 16.5" stroke="#333" stroke-width="2.4"/></svg>
<svg class="s" style="left:50px;top:92px;" width="17" height="17" viewBox="0 0 17 17"><path d="M1 1.5 H16 L10 8.5 V16 L7 14 V8.5 Z" fill="none" stroke="#333" stroke-width="1.1" stroke-linejoin="round"/></svg>
<div class="b" style="left:79px;top:84px;width:158px;height:30px;border:1px solid #bdbdbd;border-radius:4px;box-sizing:border-box"></div>
<div class="t" style="left:86.00px;top:93.29px;font-size:14.53px;line-height:14.53px;color:#9a9a9a;font-style:italic;transform:scaleX(0.8751);">Filter by name or type</div>
<div class="t" style="left:44.50px;top:124.00px;font-size:13.23px;line-height:13.23px;color:#333;-webkit-text-stroke:0.45px #333;">Features (24)</div>
<svg class="s" style="left:145px;top:122px;" width="20" height="16" viewBox="0 0 20 16">
<path d="M1 1 H6.5 L8 3 H18.5 V14.5 H1 Z" fill="none" stroke="#a9a9a9" stroke-width="1.1"/>
<path d="M5.5 7 V13.5 M2.5 10.2 H8.5" stroke="#8a9ce0" stroke-width="2"/></svg>
<div class="b" style="left:179px;top:123px;width:4px;height:14px;background:#9e9e9e"></div>
<div class="b" style="left:187px;top:123px;width:4px;height:14px;background:#9e9e9e"></div>
<svg class="s" style="left:206px;top:120px;" width="18" height="20" viewBox="0 0 18 20">
<circle cx="9" cy="11.5" r="6.8" fill="none" stroke="#333" stroke-width="1.8"/>
<path d="M6.5 1.5 H11.5 M9 1.5 V4.5 M14.5 3.5 L16 5" stroke="#333" stroke-width="1.5"/>
<path d="M9 11.5 L10.8 13.5" stroke="#333" stroke-width="1.2"/></svg>
<div class="b" style="left:49px;top:170px;width:1px;height:104px;background:#d3d3d3"></div>
<div class="b" style="left:45px;top:273px;width:9px;height:1px;background:#d3d3d3"></div>
<div class="b" style="left:40px;top:301px;width:200px;height:24px;background:#eef1f4;border-bottom:1px solid #b6d4ea;box-sizing:border-box"></div>
<div class="b" style="left:49px;top:326px;width:1px;height:129px;background:#d3d3d3"></div>
<div class="b" style="left:45px;top:455px;width:9px;height:1px;background:#d3d3d3"></div>
<div class="b" style="left:40px;top:405px;width:200px;height:24px;background:#b3dbf3"></div>
<svg class="s" style="left:44px;top:153px;" width="13" height="8" viewBox="0 0 13 8"><path d="M1.5 1.5 L6.5 6 L11.5 1.5" fill="none" stroke="#444" stroke-width="2"/></svg>
<div class="t" style="left:63.50px;top:151.00px;font-size:13.23px;line-height:13.23px;color:#333;">Default geometry</div>
<svg class="s" style="left:68px;top:179px;" width="9" height="9" viewBox="0 0 9 9"><circle cx="4.5" cy="4.5" r="3.6" fill="none" stroke="#666" stroke-width="0.9"/><circle cx="4.5" cy="4.5" r="1.7" fill="#666"/></svg>
<div class="t" style="left:85.40px;top:177.00px;font-size:13.23px;line-height:13.23px;color:#333;transform:scaleX(0.9578);">Origin</div>
<svg class="s" style="left:65px;top:201px;" width="16" height="17" viewBox="0 0 16 17">
<path d="M1 1.5 L14.5 3 V16 L1 14.5 Z" fill="#e6e6e6" stroke="#b0b0b0" stroke-width="1.1"/>
<path d="M6.5 2 V8.5 L14.5 9" fill="none" stroke="#b0b0b0" stroke-width="1.1"/></svg>
<div class="t" style="left:85.50px;top:203.00px;font-size:13.23px;line-height:13.23px;color:#9a9a9a;transform:scaleX(1.0037);">Top</div>
<svg class="s" style="left:65px;top:227px;" width="16" height="17" viewBox="0 0 16 17">
<path d="M1 1.5 L14.5 3 V16 L1 14.5 Z" fill="#e6e6e6" stroke="#b0b0b0" stroke-width="1.1"/>
<path d="M6.5 2 V8.5 L14.5 9" fill="none" stroke="#b0b0b0" stroke-width="1.1"/></svg>
<div class="t" style="left:85.50px;top:229.00px;font-size:13.23px;line-height:13.23px;color:#9a9a9a;transform:scaleX(1.0042);">Front</div>
<svg class="s" style="left:65px;top:253px;" width="16" height="17" viewBox="0 0 16 17">
<path d="M1 1.5 L14.5 3 V16 L1 14.5 Z" fill="#e6e6e6" stroke="#b0b0b0" stroke-width="1.1"/>
<path d="M6.5 2 V8.5 L14.5 9" fill="none" stroke="#b0b0b0" stroke-width="1.1"/></svg>
<div class="t" style="left:85.50px;top:255.00px;font-size:13.23px;line-height:13.23px;color:#9a9a9a;transform:scaleX(0.9783);">Right</div>
<svg class="s" style="left:46px;top:280px;" width="8" height="14" viewBox="0 0 8 14"><path d="M1.5 1.5 L6 7 L1.5 12.5" fill="none" stroke="#444" stroke-width="2"/></svg>
<svg class="s" style="left:65px;top:279px;" width="16" height="17" viewBox="0 0 16 17">
<path d="M8 1 L15 4.5 V12.5 L8 16 L1 12.5 V4.5 Z M1 4.5 L8 8 L15 4.5 M8 8 V16" fill="none" stroke="#b3b3b3" stroke-width="1.1"/></svg>
<div class="t" style="left:86.40px;top:281.00px;font-size:13.23px;line-height:13.23px;color:#9a9a9a;transform:scaleX(0.9564);">Origin Cube</div>
<svg class="s" style="left:196px;top:278px;" width="8" height="18" viewBox="0 0 8 18">
<circle cx="4" cy="9" r="2.6" fill="#333"/>
<path d="M4 0.5 V5.5 M4 12.5 V17.5" stroke="#333" stroke-width="1.7" stroke-dasharray="1.5 1.3"/></svg>
<svg class="s" style="left:44px;top:309px;" width="13" height="8" viewBox="0 0 13 8"><path d="M1.5 1.5 L6.5 6 L11.5 1.5" fill="none" stroke="#444" stroke-width="2"/></svg>
<svg class="s" style="left:66px;top:305px;" width="17" height="15" viewBox="0 0 17 15"><path d="M1 2 H6 L7.5 4 H15.5 V13.5 H1 Z" fill="none" stroke="#555" stroke-width="1.2"/></svg>
<div class="t" style="left:86.40px;top:307.00px;font-size:13.23px;line-height:13.23px;color:#333;transform:scaleX(0.9646);">Frame (5)</div>
<svg class="s" style="left:65px;top:331px;" width="16" height="16" viewBox="0 0 16 16">
<path d="M2 14 L3 10.5 L11.5 2 L14 4.5 L5.5 13 Z" fill="none" stroke="#aaa" stroke-width="1.1"/>
<path d="M1 15 H15" stroke="#9db3d6" stroke-width="1.1"/></svg>
<div class="t" style="left:85.40px;top:333.00px;font-size:13.23px;line-height:13.23px;color:#9a9a9a;transform:scaleX(0.9761);">Tube Sketch</div>
<svg class="s" style="left:65px;top:357px;" width="16" height="16" viewBox="0 0 16 16">
<path d="M1 3 L3 1 H13 L15 3 V15 H3 L1 13 Z" fill="#8f8f8f" stroke="#777" stroke-width="1"/>
<rect x="4" y="4" width="9" height="9" fill="#a8a8a8"/>
<path d="M8.5 4 V13 M4 8.5 H13" stroke="#888" stroke-width="0.8"/></svg>
<div class="t" style="left:85.40px;top:359.00px;font-size:13.23px;line-height:13.23px;color:#333;transform:scaleX(0.9706);">Tubes</div>
<svg class="s" style="left:196px;top:356px;" width="8" height="18" viewBox="0 0 8 18">
<circle cx="4" cy="9" r="2.6" fill="#333"/>
<path d="M4 0.5 V5.5 M4 12.5 V17.5" stroke="#333" stroke-width="1.7" stroke-dasharray="1.5 1.3"/></svg>
<svg class="s" style="left:64px;top:382px;" width="18" height="18" viewBox="0 0 18 18">
<path d="M1 2 L4 1 L16.5 3 V17 L13 17.5 L1 15.5 Z" fill="#ddd" stroke="#333" stroke-width="1.3"/>
<path d="M11.5 3 V17.5" stroke="#333" stroke-width="1"/>
<rect x="12.5" y="5" width="3" height="10" fill="#999"/>
<circle cx="4" cy="5.5" r="1.6" fill="#333"/><circle cx="8.5" cy="5.5" r="1.6" fill="#333"/>
<circle cx="4" cy="11" r="1.6" fill="#333"/><circle cx="8.5" cy="11" r="1.6" fill="#333"/></svg>
<div class="t" style="left:85.40px;top:385.00px;font-size:13.23px;line-height:13.23px;color:#333;transform:scaleX(0.9857);">Tube Converter</div>
<svg class="s" style="left:196px;top:382px;" width="8" height="18" viewBox="0 0 8 18">
<circle cx="4" cy="9" r="2.6" fill="#333"/>
<path d="M4 0.5 V5.5 M4 12.5 V17.5" stroke="#333" stroke-width="1.7" stroke-dasharray="1.5 1.3"/></svg>
<svg class="s" style="left:65px;top:409px;" width="16" height="16" viewBox="0 0 16 16">
<path d="M2 14 L3 10.5 L11.5 2 L14 4.5 L5.5 13 Z" fill="none" stroke="#6a8fb0" stroke-width="1.1"/>
<path d="M1 15 H15" stroke="#6a8fb0" stroke-width="1.1"/></svg>
<div class="t" style="left:85.40px;top:411.00px;font-size:13.23px;line-height:13.23px;color:#5b89a5;font-weight:bold;transform:scaleX(0.9501);">Gusset</div>
<svg class="s" style="left:65px;top:435px;" width="16" height="16" viewBox="0 0 16 16">
<path d="M1 3 L3 1 H13 L15 3 V15 H3 L1 13 Z" fill="#fff" stroke="#aaa" stroke-width="1"/>
<path d="M1 3 H13 V15" fill="none" stroke="#aaa" stroke-width="0.8"/>
<rect x="5" y="6" width="8.5" height="8.5" fill="#b5b5b5" stroke="#999" stroke-width="0.8"/></svg>
<div class="t" style="left:86.30px;top:437.00px;font-size:13.23px;line-height:13.23px;color:#9a9a9a;font-style:italic;transform:scaleX(0.9607);">Gusset</div>
<svg class="s" style="left:46px;top:461px;" width="16" height="16" viewBox="0 0 16 16">
<path d="M2 14 L3 10.5 L11.5 2 L14 4.5 L5.5 13 Z" fill="none" stroke="#aaa" stroke-width="1.1"/>
<path d="M1 15 H15" stroke="#9db3d6" stroke-width="1.1"/></svg>
<div class="t" style="left:67.10px;top:463.00px;font-size:13.23px;line-height:13.23px;color:#9a9a9a;font-style:italic;transform:scaleX(0.9684);">Gearbox Layout</div>
<svg class="s" style="left:46px;top:488px;" width="8" height="14" viewBox="0 0 8 14"><path d="M1.5 1.5 L6 7 L1.5 12.5" fill="none" stroke="#444" stroke-width="2"/></svg>
<svg class="s" style="left:66px;top:487px;" width="17" height="15" viewBox="0 0 17 15"><path d="M1 2 H6 L7.5 4 H15.5 V13.5 H1 Z" fill="none" stroke="#555" stroke-width="1.2"/></svg>
<div class="t" style="left:86.30px;top:489.00px;font-size:13.23px;line-height:13.23px;color:#333;transform:scaleX(0.9510);">GB Plates (6)</div>
<svg class="s" style="left:45px;top:512px;" width="16" height="18" viewBox="0 0 16 18">
<ellipse cx="6" cy="6" rx="4.5" ry="3.5" transform="rotate(30 6 6)" fill="none" stroke="#c4c4c4" stroke-width="1.1"/>
<circle cx="11.5" cy="13" r="2.6" fill="none" stroke="#c4c4c4" stroke-width="1.1"/>
<path d="M2 8 L9.5 15.5 M9 3.5 L14 11" stroke="#c4c4c4" stroke-width="1"/></svg>
<div class="t" style="left:67.10px;top:515.00px;font-size:13.23px;line-height:13.23px;color:#9a9a9a;font-style:italic;transform:scaleX(0.9927);">Main Belt</div>
<svg class="s" style="left:196px;top:512px;" width="8" height="18" viewBox="0 0 8 18">
<circle cx="4" cy="9" r="2.6" fill="#333"/>
<path d="M4 0.5 V5.5 M4 12.5 V17.5" stroke="#333" stroke-width="1.7" stroke-dasharray="1.5 1.3"/></svg>
<svg class="s" style="left:44px;top:538px;" width="18" height="18" viewBox="0 0 18 18">
<rect x="1" y="6" width="16" height="10" rx="1.5" fill="#9a9a9a"/>
<circle cx="6" cy="11" r="2.6" fill="#fff"/><circle cx="12" cy="11" r="2.6" fill="#fff"/>
<circle cx="6" cy="11" r="1.1" fill="#999"/><circle cx="12" cy="11" r="1.1" fill="#999"/>
<path d="M4 1 V5 M9 2 V5 M14 1 V5" stroke="#aaa" stroke-width="1"/></svg>
<div class="t" style="left:67.20px;top:541.00px;font-size:13.23px;line-height:13.23px;color:#9a9a9a;font-style:italic;transform:scaleX(1.0034);">Inter Shaft</div>
<svg class="s" style="left:196px;top:538px;" width="8" height="18" viewBox="0 0 8 18">
<circle cx="4" cy="9" r="2.6" fill="#333"/>
<path d="M4 0.5 V5.5 M4 12.5 V17.5" stroke="#333" stroke-width="1.7" stroke-dasharray="1.5 1.3"/></svg>
<svg class="s" style="left:44px;top:564px;" width="18" height="18" viewBox="0 0 18 18">
<rect x="1" y="6" width="16" height="10" rx="1.5" fill="#9a9a9a"/>
<circle cx="6" cy="11" r="2.6" fill="#fff"/><circle cx="12" cy="11" r="2.6" fill="#fff"/>
<circle cx="6" cy="11" r="1.1" fill="#999"/><circle cx="12" cy="11" r="1.1" fill="#999"/>
<path d="M4 1 V5 M9 2 V5 M14 1 V5" stroke="#aaa" stroke-width="1"/></svg>
<div class="t" style="left:67.20px;top:567.00px;font-size:13.23px;line-height:13.23px;color:#9a9a9a;font-style:italic;transform:scaleX(0.9942);">Output Shaft</div>
<svg class="s" style="left:196px;top:564px;" width="8" height="18" viewBox="0 0 8 18">
<circle cx="4" cy="9" r="2.6" fill="#333"/>
<path d="M4 0.5 V5.5 M4 12.5 V17.5" stroke="#333" stroke-width="1.7" stroke-dasharray="1.5 1.3"/></svg>
<svg class="s" style="left:46px;top:592px;" width="8" height="14" viewBox="0 0 8 14"><path d="M1.5 1.5 L6 7 L1.5 12.5" fill="none" stroke="#444" stroke-width="2"/></svg>
<svg class="s" style="left:66px;top:591px;" width="17" height="15" viewBox="0 0 17 15"><path d="M1 2 H6 L7.5 4 H15.5 V13.5 H1 Z" fill="none" stroke="#555" stroke-width="1.2"/></svg>
<div class="t" style="left:86.30px;top:593.00px;font-size:13.23px;line-height:13.23px;color:#333;transform:scaleX(0.9726);">Pocketing (4)</div>
<div class="b" style="left:45px;top:622px;width:190px;height:7px;background:#ababab"></div>
<div class="b" style="left:245px;top:538px;width:33px;height:34px;background:#fff;border:1px solid #c4c4c4;border-left:none;box-sizing:border-box"></div>
<svg class="s" style="left:250px;top:545px;" width="22" height="22" viewBox="0 0 22 22">
<path d="M2.5 3 L5 5.5 L7.5 3" fill="none" stroke="#333" stroke-width="1.2"/>
<path d="M5 7 V19" stroke="#888" stroke-width="1.6"/>
<path d="M8.5 3.5 H18 M7.5 8.5 H18 M7.5 13.5 H18 M7.5 18.5 H18" stroke="#333" stroke-width="1.2"/></svg>
<div class="b" style="left:40px;top:707px;width:200px;height:1px;background:#d4d4d4"></div>
<svg class="s" style="left:44px;top:717px;" width="13" height="8" viewBox="0 0 13 8"><path d="M1.5 1.5 L6.5 6 L11.5 1.5" fill="none" stroke="#444" stroke-width="2"/></svg>
<div class="t" style="left:63.30px;top:715.00px;font-size:13.23px;line-height:13.23px;color:#333;transform:scaleX(0.9781);">Parts (4)</div>
<svg class="s" style="left:65px;top:739px;" width="16" height="16" viewBox="0 0 16 16">
<path d="M1.5 8.5 L3.5 6.5 H6.5 V3 L8.5 1 H14.5 V13.5 L12.5 15 H1.5 Z" fill="#fff" stroke="#b0b0b0" stroke-width="1.1"/>
<path d="M1.5 8.5 H8.5 V3 H14.5 M8.5 8.5 V15 M12.5 15 V3" fill="none" stroke="#b0b0b0" stroke-width="0.9"/></svg>
<div class="t" style="left:85.60px;top:741.00px;font-size:13.23px;line-height:13.23px;color:#9a9a9a;transform:scaleX(0.9479);">Origin Cube</div>
<svg class="s" style="left:65px;top:765px;" width="16" height="16" viewBox="0 0 16 16">
<path d="M1.5 8.5 L3.5 6.5 H6.5 V3 L8.5 1 H14.5 V13.5 L12.5 15 H1.5 Z" fill="#fff" stroke="#555" stroke-width="1.1"/>
<path d="M1.5 8.5 H8.5 V3 H14.5 M8.5 8.5 V15 M12.5 15 V3" fill="none" stroke="#555" stroke-width="0.9"/></svg>
<div class="t" style="left:85.60px;top:767.00px;font-size:13.23px;line-height:13.23px;color:#333;transform:scaleX(0.9769);">Tube 1"x1"x7"</div>
<svg class="s" style="left:65px;top:791px;" width="16" height="16" viewBox="0 0 16 16">
<path d="M1.5 8.5 L3.5 6.5 H6.5 V3 L8.5 1 H14.5 V13.5 L12.5 15 H1.5 Z" fill="#fff" stroke="#555" stroke-width="1.1"/>
<path d="M1.5 8.5 H8.5 V3 H14.5 M8.5 8.5 V15 M12.5 15 V3" fill="none" stroke="#555" stroke-width="0.9"/></svg>
<div class="t" style="left:85.60px;top:793.00px;font-size:13.23px;line-height:13.23px;color:#333;transform:scaleX(0.9769);">Tube 1"x1"x7"</div>
<svg class="s" style="left:65px;top:817px;" width="16" height="16" viewBox="0 0 16 16">
<path d="M1.5 8.5 L3.5 6.5 H6.5 V3 L8.5 1 H14.5 V13.5 L12.5 15 H1.5 Z" fill="#fff" stroke="#555" stroke-width="1.1"/>
<path d="M1.5 8.5 H8.5 V3 H14.5 M8.5 8.5 V15 M12.5 15 V3" fill="none" stroke="#555" stroke-width="0.9"/></svg>
<div class="t" style="left:85.60px;top:819.00px;font-size:13.23px;line-height:13.23px;color:#333;transform:scaleX(0.9769);">Tube 1"x1"x8"</div>
<svg class="s" style="left:246px;top:76px;overflow:hidden" width="1673" height="974" viewBox="246 76 1673 974"><defs><linearGradient id="gg" x1="0" y1="77" x2="0" y2="900" gradientUnits="userSpaceOnUse"><stop offset="0" stop-color="#529e53"/><stop offset="0.85" stop-color="#3f8c41"/><stop offset="1" stop-color="#3c893e"/></linearGradient></defs><rect x="246" y="268" width="1673" height="1.6" fill="#c2dfe8"/><path d="M1238.5 60 V790.2 H584 V899.3 H1348.3 V60 Z" fill="url(#gg)"/><circle cx="638.7" cy="844.7" r="10.4" fill="#fff"/><circle cx="693.2" cy="844.7" r="10.4" fill="#fff"/><circle cx="747.7" cy="844.7" r="10.4" fill="#fff"/><circle cx="802.2" cy="844.7" r="10.4" fill="#fff"/><circle cx="856.7" cy="844.7" r="10.4" fill="#fff"/><circle cx="911.2" cy="844.7" r="10.4" fill="#fff"/><circle cx="965.7" cy="844.7" r="10.4" fill="#fff"/><circle cx="1020.2" cy="844.7" r="10.4" fill="#fff"/><circle cx="1074.7" cy="844.7" r="10.4" fill="#fff"/><circle cx="1129.2" cy="844.7" r="10.4" fill="#fff"/><circle cx="1183.7" cy="844.7" r="10.4" fill="#fff"/><circle cx="1238.2" cy="844.7" r="10.4" fill="#fff"/><circle cx="1292.7" cy="844.7" r="10.4" fill="#fff"/><circle cx="1293.0" cy="735.7" r="10.4" fill="#fff"/><circle cx="1293.0" cy="681.2" r="10.4" fill="#fff"/><circle cx="1293.0" cy="626.7" r="10.4" fill="#fff"/><circle cx="1293.0" cy="572.2" r="10.4" fill="#fff"/><circle cx="1293.0" cy="517.7" r="10.4" fill="#fff"/><circle cx="1293.0" cy="463.2" r="10.4" fill="#fff"/><circle cx="1293.0" cy="408.7" r="10.4" fill="#fff"/><circle cx="1293.0" cy="354.2" r="10.4" fill="#fff"/><circle cx="1293.0" cy="299.7" r="10.4" fill="#fff"/><circle cx="1293.0" cy="245.2" r="10.4" fill="#fff"/><circle cx="1293.0" cy="190.7" r="10.4" fill="#fff"/><circle cx="1293.0" cy="136.2" r="10.4" fill="#fff"/><circle cx="1293.0" cy="81.7" r="10.4" fill="#fff"/><path d="M1052.4 829.6 L1270.7 502.3 A27.4 27.4 0 0 1 1320.6 517.6 L1320.6 844.7 A27.4 27.4 0 0 1 1293.2 872.1 L1075 872.1 A27.4 27.4 0 0 1 1052.4 829.6 Z" fill="rgba(152,164,175,0.28)" stroke="none"/><circle cx="638.7" cy="844.7" r="10.4" fill="none" stroke="#111" stroke-width="1.6"/><circle cx="693.2" cy="844.7" r="10.4" fill="none" stroke="#111" stroke-width="1.6"/><circle cx="747.7" cy="844.7" r="10.4" fill="none" stroke="#111" stroke-width="1.6"/><circle cx="802.2" cy="844.7" r="10.4" fill="none" stroke="#111" stroke-width="1.6"/><circle cx="856.7" cy="844.7" r="10.4" fill="none" stroke="#111" stroke-width="1.6"/><circle cx="911.2" cy="844.7" r="10.4" fill="none" stroke="#111" stroke-width="1.6"/><circle cx="965.7" cy="844.7" r="10.4" fill="none" stroke="#111" stroke-width="1.6"/><circle cx="1020.2" cy="844.7" r="10.4" fill="none" stroke="#111" stroke-width="1.6"/><circle cx="1074.7" cy="844.7" r="10.4" fill="none" stroke="#111" stroke-width="1.6"/><circle cx="1129.2" cy="844.7" r="10.4" fill="none" stroke="#111" stroke-width="1.6"/><circle cx="1183.7" cy="844.7" r="10.4" fill="none" stroke="#111" stroke-width="1.6"/><circle cx="1238.2" cy="844.7" r="10.4" fill="none" stroke="#111" stroke-width="1.6"/><circle cx="1292.7" cy="844.7" r="10.4" fill="none" stroke="#111" stroke-width="1.6"/><circle cx="1293.0" cy="735.7" r="10.4" fill="none" stroke="#111" stroke-width="1.6"/><circle cx="1293.0" cy="681.2" r="10.4" fill="none" stroke="#111" stroke-width="1.6"/><circle cx="1293.0" cy="626.7" r="10.4" fill="none" stroke="#111" stroke-width="1.6"/><circle cx="1293.0" cy="572.2" r="10.4" fill="none" stroke="#111" stroke-width="1.6"/><circle cx="1293.0" cy="517.7" r="10.4" fill="none" stroke="#111" stroke-width="1.6"/><circle cx="1293.0" cy="463.2" r="10.4" fill="none" stroke="#111" stroke-width="1.6"/><circle cx="1293.0" cy="408.7" r="10.4" fill="none" stroke="#111" stroke-width="1.6"/><circle cx="1293.0" cy="354.2" r="10.4" fill="none" stroke="#111" stroke-width="1.6"/><circle cx="1293.0" cy="299.7" r="10.4" fill="none" stroke="#111" stroke-width="1.6"/><circle cx="1293.0" cy="245.2" r="10.4" fill="none" stroke="#111" stroke-width="1.6"/><circle cx="1293.0" cy="190.7" r="10.4" fill="none" stroke="#111" stroke-width="1.6"/><circle cx="1293.0" cy="136.2" r="10.4" fill="none" stroke="#111" stroke-width="1.6"/><circle cx="1293.0" cy="81.7" r="10.4" fill="none" stroke="#111" stroke-width="1.6"/><path d="M1238.5 60 V790.2 H584 V899.3 H1348.3 V60" fill="none" stroke="#141414" stroke-width="1.7"/><path d="M1238.5 790.2 H1348.3" fill="none" stroke="#141414" stroke-width="1.7"/><path d="M1052.4 829.6 L1270.7 502.3 A27.4 27.4 0 0 1 1320.6 517.6 L1320.6 844.7 A27.4 27.4 0 0 1 1293.2 872.1 L1075 872.1 A27.4 27.4 0 0 1 1052.4 829.6 Z" fill="none" stroke="#111" stroke-width="2.1"/><circle cx="1075" cy="844.7" r="10.6" fill="none" stroke="#111" stroke-width="2.3"/><circle cx="1075" cy="844.7" r="3.4" fill="#111"/><circle cx="1184" cy="844.7" r="10.6" fill="none" stroke="#111" stroke-width="2.3"/><circle cx="1184" cy="844.7" r="3.4" fill="#111"/><circle cx="1293.2" cy="844.7" r="10.6" fill="none" stroke="#111" stroke-width="2.3"/><circle cx="1293.2" cy="844.7" r="3.4" fill="#111"/><circle cx="1293.2" cy="735.8" r="10.6" fill="none" stroke="#111" stroke-width="2.3"/><circle cx="1293.2" cy="735.8" r="3.4" fill="#111"/><circle cx="1293.2" cy="626.8" r="10.6" fill="none" stroke="#111" stroke-width="2.3"/><circle cx="1293.2" cy="626.8" r="3.4" fill="#111"/><circle cx="1293.2" cy="517.6" r="10.6" fill="none" stroke="#111" stroke-width="2.3"/><circle cx="1293.2" cy="517.6" r="3.4" fill="#111"/><circle cx="1052.4" cy="829.6" r="3.1" fill="#111"/><circle cx="1270.7" cy="502.3" r="3.1" fill="#111"/><circle cx="1320.6" cy="517.6" r="3.1" fill="#111"/><circle cx="1320.6" cy="844.7" r="3.1" fill="#111"/><circle cx="1293.2" cy="872.1" r="3.1" fill="#111"/><circle cx="1075" cy="872.1" r="3.1" fill="#111"/><path d="M1372.8 495.7 L1327 508.5" stroke="#111" stroke-width="1.3"/><path d="M1320 510.5 L1330.5 502.8 L1332.5 510.2 Z" fill="#111"/><path d="M1044.3 914.6 L1067.5 862.5" stroke="#111" stroke-width="1.3"/><path d="M1071 855 L1070.5 866 L1063.6 862.8 Z" fill="#111"/><circle cx="1348.3" cy="899.4" r="4.6" fill="#fff" stroke="#111" stroke-width="1.5"/><circle cx="1348.3" cy="899.4" r="1.6" fill="#111"/></svg>
<div class="t" style="left:1378.80px;top:480.90px;font-size:17.59px;line-height:17.59px;color:#111;transform:scaleX(0.9441);">R0.25</div>
<div class="t" style="left:1010.00px;top:920.37px;font-size:17.15px;line-height:17.15px;color:#111;transform:scaleX(0.9777);">Ø0.196</div>
<div class="t" style="left:990.00px;top:924.44px;font-size:12.00px;line-height:12.00px;color:#999;font-style:italic;transform:scaleX(1.3408);font-family:"Liberation Serif",serif;">fx</div>
<svg class="s" style="left:1750px;top:85px;" width="165" height="165" viewBox="1750 85 165 165">
<path d="M1822.5 100.5 L1830 91 L1837.5 100.5 Z" fill="#9a9a9a"/>
<path d="M1822.5 231 L1830 240.5 L1837.5 231 Z" fill="#9a9a9a"/>
<path d="M1765 158 L1755 165.5 L1765 173 Z" fill="#9a9a9a"/>
<path d="M1895 158 L1905 165.5 L1895 173 Z" fill="#9a9a9a"/>
<path d="M1809 102 Q1793 107 1783.5 117" fill="none" stroke="#999" stroke-width="4.5"/>
<path d="M1776 125 L1778 111 L1789.5 121.5 Z" fill="#999"/>
<path d="M1851 102 Q1867 107 1876.5 117" fill="none" stroke="#999" stroke-width="4.5"/>
<path d="M1884 125 L1882 111 L1870.5 121.5 Z" fill="#999"/>
<rect x="1811.5" y="137.5" width="37" height="56.5" fill="#e4e6ea"/><rect x="1802" y="147.5" width="56" height="37" fill="#e4e6ea"/>
<rect x="1807" y="143" width="45.5" height="45" rx="9" fill="#fff"/>
<path d="M1799.5 137.5 V196.5 H1858" fill="none" stroke="#3a3ac8" stroke-width="1.3"/>
<path d="M1800 196.5 H1858" fill="none" stroke="#33bb33" stroke-width="1.3"/>
<path d="M1866.5 222.5 L1875 219 L1884 222.5 V235.5 L1875 240.5 L1866.5 235.5 Z" fill="#c8c8c8" stroke="#333" stroke-width="1.2"/>
<path d="M1866.5 222.5 L1875 226.5 L1884 222.5 M1875 226.5 V240.5" fill="none" stroke="#333" stroke-width="1"/>
<path d="M1875 226.5 L1884 222.5 V235.5 L1875 240.5 Z" fill="#e8e8e8"/>
<path d="M1891.5 230 H1900.5 L1896 235 Z" fill="#222"/>
</svg>
<div class="t" style="left:1796.50px;top:121.07px;font-size:12.79px;line-height:12.79px;color:#5050c8;transform:scaleX(0.8957);">Z</div>
<div class="t" style="left:1865.00px;top:189.52px;font-size:13.08px;line-height:13.08px;color:#22aa22;transform:scaleX(0.8596);">Y</div>
<div class="t" style="left:1816.50px;top:158.02px;font-size:13.08px;line-height:13.08px;color:#111;transform:scaleX(0.8843);">Right</div>
<div class="b" style="left:1888px;top:433px;width:31px;height:133px;border:1px solid #bdbdbd;border-right:none;box-sizing:border-box;background:#fff"></div>
<div class="b" style="left:1888px;top:466px;width:31px;height:1px;background:#cfcfcf"></div>
<div class="b" style="left:1888px;top:499px;width:31px;height:1px;background:#cfcfcf"></div>
<div class="b" style="left:1888px;top:532px;width:31px;height:1px;background:#cfcfcf"></div>
<div class="b" style="left:1888px;top:576px;width:31px;height:100px;border:1px solid #bdbdbd;border-right:none;box-sizing:border-box;background:#fff"></div>
<div class="b" style="left:1888px;top:609px;width:31px;height:1px;background:#cfcfcf"></div>
<div class="b" style="left:1888px;top:642px;width:31px;height:1px;background:#cfcfcf"></div>
<svg class="s" style="left:1894px;top:440px;" width="22" height="20" viewBox="0 0 22 20">
<path d="M3 14 L10 2 L14 4 Z" fill="#999"/>
<path d="M4 14 L13 5 L17 8 Z" fill="#777"/>
<rect x="2" y="12.5" width="18" height="5" fill="#f2f2f2" stroke="#999" stroke-width="1"/>
<circle cx="5" cy="15" r="1.3" fill="none" stroke="#888" stroke-width="0.8"/>
<rect x="13" y="12.5" width="7" height="5" fill="#ccc"/></svg>
<svg class="s" style="left:1894px;top:472px;" width="22" height="22" viewBox="0 0 22 22">
<rect x="1.5" y="1.5" width="8" height="8" fill="#fff" stroke="#2a62c8" stroke-width="1.3"/>
<path d="M1.5 4.2 H9.5 M1.5 6.8 H9.5 M4.2 1.5 V9.5 M6.8 1.5 V9.5" stroke="#2a62c8" stroke-width="1"/>
<path d="M7 10 L14 6.5 L21 10 V17.5 L14 21 L7 17.5 Z M7 10 L14 13.5 L21 10 M14 13.5 V21" fill="none" stroke="#222" stroke-width="1.2"/></svg>
<svg class="s" style="left:1894px;top:505px;" width="22" height="22" viewBox="0 0 22 22">
<rect x="2" y="1.5" width="7" height="7" fill="#fff" stroke="#333" stroke-width="1.1"/>
<path d="M2 3.8 H9 M2 6.2 H9 M4.3 1.5 V8.5 M6.7 1.5 V8.5" stroke="#333" stroke-width="0.8"/>
<path d="M7 10 L12 7.5 L17 10 V15 L12 17.5 L7 15 Z M7 10 L12 12.5 L17 10 M12 12.5 V17.5" fill="none" stroke="#333" stroke-width="1.1"/>
<path d="M4 9 Q2.5 13 4 18 M19 7 Q21 12 19 17" fill="none" stroke="#333" stroke-width="1.1"/></svg>
<svg class="s" style="left:1894px;top:538px;" width="22" height="22" viewBox="0 0 22 22">
<rect x="2" y="1.5" width="8" height="7" fill="#fff" stroke="#333" stroke-width="1.1"/>
<path d="M2 4 H10 M2 6.3 H10 M4.7 1.5 V8.5 M7.3 1.5 V8.5" stroke="#333" stroke-width="0.8"/>
<path d="M4 9 Q1.5 14 4 20 M20 9 Q22 14 20 20" fill="none" stroke="#222" stroke-width="1.6"/>
<path d="M8 19 Q10 11 14 11 M8.5 14 H13" fill="none" stroke="#222" stroke-width="1.6"/>
<path d="M11 13 L17 19 M17 13 L11 19" stroke="#222" stroke-width="1.6"/></svg>
<svg class="s" style="left:1894px;top:582px;" width="22" height="22" viewBox="0 0 22 22">
<rect x="1" y="1" width="20" height="20" rx="3" fill="#d7d7d7"/>
<path d="M2.5 10 L4 8 H18 L19.5 10 V18 L18 19 H4 L2.5 18 Z" fill="#222"/>
<circle cx="8" cy="13" r="2.6" fill="#5aa0e0"/><circle cx="14.5" cy="13" r="2.6" fill="#5aa0e0"/>
<path d="M7 4 H15 M11 4 V8" stroke="#3a6ac0" stroke-width="1.2"/></svg>
<svg class="s" style="left:1894px;top:615px;" width="22" height="22" viewBox="0 0 22 22">
<rect x="1" y="1" width="20" height="20" rx="2" fill="#4caf50" stroke="#bfe3c0" stroke-width="1"/>
<path d="M4 6 Q7.5 4.5 10.5 6 V17 Q7.5 15.5 4 17 Z M11.5 6 Q14.5 4.5 18 6 V17 Q14.5 15.5 11.5 17 Z" fill="#fff"/></svg>
<svg class="s" style="left:1894px;top:648px;" width="22" height="22" viewBox="0 0 22 22">
<rect x="1" y="1" width="20" height="20" rx="2" fill="#1847a8" stroke="#333" stroke-width="1.2"/>
<path d="M4 6 Q7.5 4.5 10.5 6 V17 Q7.5 15.5 4 17 Z M11.5 6 Q14.5 4.5 18 6 V17 Q14.5 15.5 11.5 17 Z" fill="#fff"/></svg>
<svg class="s" style="left:1820px;top:1027px;" width="90" height="18" viewBox="0 0 90 18">
<g transform="translate(-1820 -1027)">
<path d="M1827.7 1033.6 V1039 Q1827.7 1041.8 1832.5 1041.8 Q1837.4 1041.8 1837.4 1039 V1033.6" fill="#fff" stroke="#222" stroke-width="1.2"/>
<ellipse cx="1832.5" cy="1033.6" rx="4.9" ry="3.2" fill="#fff" stroke="#222" stroke-width="1.2"/>
<ellipse cx="1832.5" cy="1033.4" rx="2.2" ry="1.2" fill="none" stroke="#222" stroke-width="0.9"/>
<path d="M1832.5 1041.8 H1822.8 V1036.5 H1828" fill="#fff" stroke="#222" stroke-width="1.2"/>
<path d="M1824.5 1041.5 V1040 M1826.8 1041.5 V1040 M1829 1041.5 V1040 M1831.2 1041.5 V1040" stroke="#555" stroke-width="0.7"/>
<path d="M1855.5 1043 V1040 A9.5 9.5 0 0 1 1874.5 1040 V1043 Z" fill="#fff" stroke="#222" stroke-width="1.3"/>
<path d="M1859.5 1040 A5.5 5 0 0 1 1870.5 1040 Q1865 1036.5 1859.5 1040 Z" fill="#fff" stroke="#222" stroke-width="1"/>
<path d="M1895 1029.5 H1906 M1900.5 1029.5 V1041 M1894 1043 H1907" stroke="#222" stroke-width="1.3"/>
<path d="M1893.5 1037.5 L1895 1030 L1896.5 1037.5 M1904.5 1037.5 L1906 1030 L1907.5 1037.5" fill="none" stroke="#222" stroke-width="0.9"/>
<path d="M1893 1038 H1897 M1904 1038 H1908" stroke="#222" stroke-width="1.6"/>
</g></svg>
<div class="b" style="left:322px;top:79px;width:220px;height:220px;background:#fff;box-shadow:0 5px 12px rgba(0,0,0,0.22), 0 0 3px rgba(0,0,0,0.14)"></div>
<div class="b" style="left:322px;top:107px;width:220px;height:1px;background:#dadada"></div>
<div class="t" style="left:328.20px;top:86.90px;font-size:13.81px;line-height:13.81px;color:#333;transform:scaleX(0.9304);-webkit-text-stroke:0.55px #333;">Gusset</div>
<div class="b" style="left:486px;top:79px;width:28px;height:28px;background:#0b8f12"></div>
<svg class="s" style="left:486px;top:79px;" width="28" height="28" viewBox="0 0 28 28"><path d="M7 14.5 L12 19.5 L21.5 9" fill="none" stroke="#fff" stroke-width="3"/></svg>
<svg class="s" style="left:521px;top:87px;" width="14" height="14" viewBox="0 0 14 14"><path d="M2 2 L12 12 M12 2 L2 12" stroke="#c8313c" stroke-width="3"/></svg>
<div class="b" style="left:325.5px;top:113.2px;width:187px;height:43px;border:1px solid #d2d2d2;border-radius:2px;box-sizing:border-box"></div>
<div class="t" style="left:331.20px;top:119.96px;font-size:10.20px;line-height:10.20px;color:#555;transform:scaleX(0.9801);-webkit-text-stroke:0.25px #555;">Sketch plane</div>
<div class="t" style="left:332.80px;top:138.29px;font-size:14.53px;line-height:14.53px;color:#555;transform:scaleX(0.8740);">Face of Tubes</div>
<svg class="s" style="left:492px;top:140px;" width="10" height="10" viewBox="0 0 10 10"><path d="M1 1 L9 9 M9 1 L1 9" stroke="#555" stroke-width="1.3"/></svg>
<svg class="s" style="left:516px;top:116px;" width="20" height="20" viewBox="0 0 20 20">
<circle cx="10" cy="10" r="8.5" fill="none" stroke="#444" stroke-width="1.1"/>
<path d="M10 3.5 A6.5 6.5 0 1 0 16.5 10 H10 Z" fill="none" stroke="#444" stroke-width="1.6"/></svg>
<svg class="s" style="left:326px;top:170px;" width="12" height="12" viewBox="0 0 12 12"><rect x="0" y="0" width="12" height="12" rx="2" fill="#1f50b8"/><path d="M2.8 6.2 L5 8.4 L9.3 3.8" fill="none" stroke="#fff" stroke-width="1.7"/></svg>
<div class="t" style="left:342.50px;top:169.83px;font-size:13.66px;line-height:13.66px;color:#555;transform:scaleX(0.9715);">Disable imprinting</div>
<svg class="s" style="left:326px;top:198px;" width="12" height="12" viewBox="0 0 12 12"><rect x="0.5" y="0.5" width="11" height="11" rx="2" fill="#fff" stroke="#8a8a8a" stroke-width="1"/></svg>
<div class="t" style="left:342.50px;top:197.83px;font-size:13.66px;line-height:13.66px;color:#555;transform:scaleX(0.9708);">Show constraints</div>
<svg class="s" style="left:326px;top:225px;" width="12" height="12" viewBox="0 0 12 12"><rect x="0.5" y="0.5" width="11" height="11" rx="2" fill="#fff" stroke="#8a8a8a" stroke-width="1"/></svg>
<div class="t" style="left:342.50px;top:224.83px;font-size:13.66px;line-height:13.66px;color:#555;transform:scaleX(0.9470);">Show expressions</div>
<svg class="s" style="left:326px;top:252px;" width="12" height="12" viewBox="0 0 12 12"><rect x="0" y="0" width="12" height="12" rx="2" fill="#1f50b8"/><path d="M2.8 6.2 L5 8.4 L9.3 3.8" fill="none" stroke="#fff" stroke-width="1.7"/></svg>
<div class="t" style="left:342.50px;top:251.83px;font-size:13.66px;line-height:13.66px;color:#555;transform:scaleX(0.9639);">Show errors</div>
<div class="b" style="left:441px;top:274px;width:22px;height:22px;border:1px solid #b5b5b5;border-radius:3px;box-sizing:border-box"></div>
<svg class="s" style="left:441px;top:274px;" width="22" height="22" viewBox="0 0 22 22">
<circle cx="10.8" cy="11" r="7.2" fill="none" stroke="#333" stroke-width="1.3"/>
<path d="M7 14.5 L9 10 L14 4.5 L15.5 6 L10.5 11.5 Z" fill="none" stroke="#333" stroke-width="1.1"/>
<path d="M5 15 H16" stroke="#4a6fb5" stroke-width="1.1"/>
<path d="M15 16 L18 19" stroke="#333" stroke-width="1.6"/></svg>
<div class="b" style="left:467px;top:274px;width:49px;height:22px;border:1px solid #b5b5b5;border-radius:3px;box-sizing:border-box"></div>
<div class="t" style="left:479.00px;top:279.02px;font-size:13.08px;line-height:13.08px;color:#333;transform:scaleX(0.9168);">Final</div>
<svg class="s" style="left:524px;top:281px;" width="14" height="14" viewBox="0 0 14 14">
<circle cx="7" cy="7" r="6.2" fill="#9a9a9a"/>
<path d="M4.9 5.2 Q4.9 3 7 3 Q9.1 3 9.1 4.9 Q9.1 6.1 7.6 6.8 Q7 7.2 7 8.4" fill="none" stroke="#fff" stroke-width="1.6"/>
<circle cx="7" cy="10.5" r="0.95" fill="#fff"/></svg>
<div class="b" style="left:40px;top:1050px;width:1879px;height:29px;background:#d6d6d6"></div>
<div class="b" style="left:40px;top:1050px;width:34px;height:29px;background:#d9d9d9"></div>
<svg class="s" style="left:48px;top:1056px;" width="17" height="17" viewBox="0 0 17 17"><path d="M8.5 1 V16 M1 8.5 H16" stroke="#555" stroke-width="2.6"/></svg>
<svg class="s" style="left:74px;top:1050px;" width="44" height="29" viewBox="0 0 44 29"><path d="M0 0 H34 L42 14.5 L34 29 H0 Z" fill="#e6e6e6"/></svg>
<svg class="s" style="left:82px;top:1054px;" width="20" height="19" viewBox="0 0 20 19"><path d="M10 1 L19 9.5 H16.5 V18 H12 V12.5 H8 V18 H3.5 V9.5 H1 Z" fill="#5c5c5c"/><rect x="14" y="2" width="2.5" height="5" fill="#5c5c5c"/></svg>
<svg class="s" style="left:108px;top:1050px;" width="128" height="29" viewBox="0 0 128 29"><path d="M0 0 H116 L125 14.5 L116 29 H0 L8 14.5 Z" fill="#fff"/></svg>
<svg class="s" style="left:125px;top:1055px;" width="20" height="17" viewBox="0 0 20 17"><path d="M1 2 H7 L8.5 4 H19 V15.5 H1 Z" fill="none" stroke="#444" stroke-width="1.2"/></svg>
<div class="t" style="left:150.50px;top:1056.10px;font-size:15.70px;line-height:15.70px;color:#555;transform:scaleX(0.8529);">Exercise 3</div>
<svg class="s" style="left:236px;top:1050px;" width="202" height="29" viewBox="0 0 202 29"><path d="M0 0 H202 V29 H6 L0 23 Z" fill="#e5e5e5"/></svg>
<svg class="s" style="left:248px;top:1055px;" width="15" height="16" viewBox="0 0 15 16">
<circle cx="7.5" cy="8" r="6.5" fill="#6f9fd8"/>
<rect x="6" y="3.5" width="3" height="9" rx="1.3" fill="#fff"/>
<rect x="6" y="7" width="3" height="2" fill="#6f9fd8"/></svg>
<svg class="s" style="left:266px;top:1054px;" width="20" height="19" viewBox="0 0 20 19">
<path d="M1.5 3.5 L3.5 1.5 H16.5 L18.5 3.5 V17.5 H3.5 L1.5 15.5 Z" fill="#fff" stroke="#333" stroke-width="1.1"/>
<path d="M1.5 3.5 H16.5 V17.5 M16.5 3.5 L18.5 1.5" fill="none" stroke="#333" stroke-width="0.9"/>
<rect x="4.5" y="4.5" width="9.5" height="9.5" fill="#8c8c8c" stroke="#444" stroke-width="0.8"/></svg>
<div class="t" style="left:289.50px;top:1056.60px;font-size:15.70px;line-height:15.70px;color:#666;transform:scaleX(0.8804);">Exercise 3 Assembly</div>
<div class="b" style="left:438px;top:1050px;width:199px;height:29px;background:#fff"></div>
<div class="b" style="left:439px;top:1076px;width:197px;height:3px;background:#1e4fa8;border-radius:1px"></div>
<svg class="s" style="left:449px;top:1054px;" width="19" height="20" viewBox="0 0 19 20">
<path d="M1.5 6 L3.5 4.5 H7 V18.5 H1.5 Z" fill="#fff" stroke="#333" stroke-width="1.1"/>
<path d="M9 3 L11 1.5 H17.5 V18.5 H9 Z" fill="#fff" stroke="#333" stroke-width="1.1"/>
<path d="M5 4.5 V18.5 M14.5 1.5 V18.5" stroke="#333" stroke-width="0.8"/></svg>
<div class="t" style="left:471.50px;top:1056.60px;font-size:15.70px;line-height:15.70px;color:#333;transform:scaleX(0.8660);">Exercise 3 Part Studio</div>
</body></html>
